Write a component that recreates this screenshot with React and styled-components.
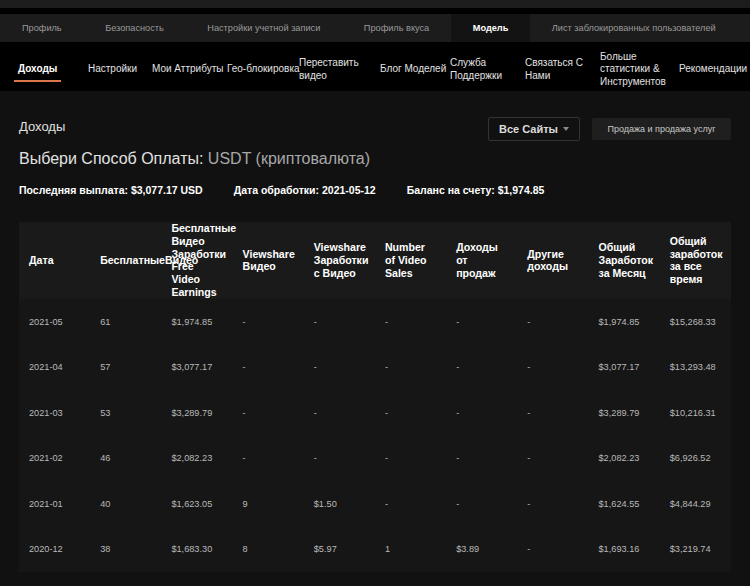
import React from 'react';
import styled, { createGlobalStyle } from 'styled-components';

const GlobalStyle = createGlobalStyle`
  html, body {
    margin: 0;
    padding: 0;
    background: #111111;
  }
  body {
    font-family: "Liberation Sans", Arial, sans-serif;
    color: #dddddd;
  }
`;

const TABS = [
  'Профиль',
  'Безопасность',
  'Настройки учетной записи',
  'Профиль вкуса',
  'Модель',
  'Лист заблокированных пользователей',
];

const NAV = [
  { lines: ['Доходы'], w: 70, active: true },
  { lines: ['Настройки'], w: 64 },
  { lines: ['Мои Аттрибуты'], w: 75 },
  { lines: ['Гео-блокировка'], w: 72 },
  { lines: ['Переставить', 'видео'], w: 81 },
  { lines: ['Блог Моделей'], w: 70 },
  { lines: ['Служба', 'Поддержки'], w: 75 },
  { lines: ['Связаться С', 'Нами'], w: 75 },
  { lines: ['Больше', 'статистики &', 'Инструментов'], w: 79 },
  { lines: ['Рекомендации'], w: 72 },
];

const HEADERS = [
  'Дата',
  'БесплатныеВидео',
  'Бесплатные Видео Заработки Free Video Earnings',
  'Viewshare Видео',
  'Viewshare Заработки с Видео',
  'Number of Video Sales',
  'Доходы от продаж',
  'Другие доходы',
  'Общий Заработок за Месяц',
  'Общий заработок за все время',
];

const ROWS = [
  ['2021-05', '61', '$1,974.85', '-', '-', '-', '-', '-', '$1,974.85', '$15,268.33'],
  ['2021-04', '57', '$3,077.17', '-', '-', '-', '-', '-', '$3,077.17', '$13,293.48'],
  ['2021-03', '53', '$3,289.79', '-', '-', '-', '-', '-', '$3,289.79', '$10,216.31'],
  ['2021-02', '46', '$2,082.23', '-', '-', '-', '-', '-', '$2,082.23', '$6,926.52'],
  ['2021-01', '40', '$1,623.05', '9', '$1.50', '-', '-', '-', '$1,624.55', '$4,844.29'],
  ['2020-12', '38', '$1,683.30', '8', '$5.97', '1', '$3.89', '-', '$1,693.16', '$3,219.74'],
];

const App = () => {
  return (
    <>
      <GlobalStyle />
      <TopStrip />
      <TabBar>
        {TABS.map((t) => (
          <Tab key={t} $active={t === 'Модель'}>
            {t}
          </Tab>
        ))}
      </TabBar>
      <Nav>
        {NAV.map((item) => (
          <NavItem key={item.lines.join(' ')} style={{ '--w': item.w + 'px' }}>
            <NavLabel $active={item.active}>
              {item.lines.map((l) => (
                <NavLine key={l}>{l}</NavLine>
              ))}
            </NavLabel>
          </NavItem>
        ))}
      </Nav>
      <Main>
        <TitleRow>
          <PageTitle>Доходы</PageTitle>
          <Actions>
            <SelectButton>
              Все Сайты <Caret />
            </SelectButton>
            <GhostButton>Продажа и продажа услуг</GhostButton>
          </Actions>
        </TitleRow>
        <Method>
          Выбери Способ Оплаты: <MethodValue>USDT (криптовалюта)</MethodValue>
        </Method>
        <Summary>
          <span>Последняя выплата: $3,077.17 USD</span>
          <span>Дата обработки: 2021-05-12</span>
          <span>Баланс на счету: $1,974.85</span>
        </Summary>
        <Table>
          <colgroup>
            {HEADERS.map((h) => (
              <col key={h} />
            ))}
          </colgroup>
          <thead>
            <tr>
              {HEADERS.map((h) => (
                <Th key={h}>{h}</Th>
              ))}
            </tr>
          </thead>
          <tbody>
            {ROWS.map((r) => (
              <tr key={r[0]}>
                {r.map((c, i) => (
                  <Td key={i}>{c}</Td>
                ))}
              </tr>
            ))}
          </tbody>
        </Table>
      </Main>
    </>
  );
};

const TopStrip = styled.div`
  height: 8px;
  background: #1d1d1d;
  border-bottom: 6px solid #000000;
`;

const TabBar = styled.div`
  display: flex;
  height: 28px;
  background: #1c1c1c;
`;

const Tab = styled.div`
  display: flex;
  align-items: center;
  padding: 0 21.5px 0 22px;
  font-size: 9.2px;
  white-space: nowrap;
  color: ${(p) => (p.$active ? '#ffffff' : '#9a9a9a')};
  font-weight: ${(p) => (p.$active ? 700 : 400)};
  background: ${(p) => (p.$active ? '#131313' : 'transparent')};
`;

const Nav = styled.nav`
  box-sizing: border-box;
  display: flex;
  align-items: center;
  height: 49px;
  padding: 6px 0 0 18px;
  background: #000000;
`;

const NavItem = styled.div`
  flex: 0 0 var(--w);
  width: var(--w);
  font-size: 10px;
  line-height: 12.5px;
  color: #e2e2e2;
`;

const NavLabel = styled.span`
  display: inline-block;
  ${(p) =>
    p.$active &&
    `
    margin-left: -4px;
    padding: 6px 4px 5px;
    font-weight: 700;
    color: #ffffff;
    border-bottom: 2px solid #d9774a;
  `}
`;

const NavLine = styled.span`
  display: block;
  white-space: nowrap;
`;

const Main = styled.main`
  padding: 26px 19px 16px;
`;

const TitleRow = styled.div`
  display: flex;
  align-items: center;
  justify-content: space-between;
  height: 24px;
`;

const PageTitle = styled.h1`
  margin: 0 0 5px;
  font-size: 13px;
  font-weight: 400;
  color: #e0e0e0;
`;

const Actions = styled.div`
  display: flex;
  align-items: center;
  gap: 12px;
`;

const SelectButton = styled.button`
  display: flex;
  align-items: center;
  justify-content: center;
  gap: 5px;
  width: 92px;
  height: 24px;
  padding: 0;
  background: #111111;
  border: 1px solid #333333;
  border-radius: 2px;
  font-family: inherit;
  font-size: 11px;
  font-weight: 700;
  color: #dddddd;
`;

const Caret = styled.span`
  width: 0;
  height: 0;
  border-left: 3.5px solid transparent;
  border-right: 3.5px solid transparent;
  border-top: 4px solid #888888;
`;

const GhostButton = styled.button`
  width: 139px;
  height: 22px;
  padding: 0;
  background: #1f1f1f;
  border: none;
  border-radius: 2px;
  font-family: inherit;
  font-size: 9px;
  color: #c8c8c8;
`;

const Method = styled.h2`
  margin: 9px 0 0;
  font-size: 16px;
  line-height: 18px;
  font-weight: 400;
  color: #e2e2e2;
`;

const MethodValue = styled.span`
  color: #a8a8a8;
`;

const Summary = styled.div`
  display: flex;
  gap: 31px;
  margin-top: 16px;
  font-size: 10.5px;
  font-weight: 700;
  color: #ffffff;
`;

const Table = styled.table`
  width: 712px;
  margin-top: 26px;
  table-layout: fixed;
  border-collapse: collapse;
  background: #161616;

  col {
    width: 71.2px;
  }
`;

const Th = styled.th`
  height: 76px;
  padding: 0 9px 0 10px;
  background: #1a1a1a;
  text-align: left;
  vertical-align: middle;
  font-size: 10.6px;
  line-height: 12.8px;
  font-weight: 700;
  color: #ffffff;
  overflow: visible;
`;

const Td = styled.td`
  height: 45.5px;
  padding: 0 6px 0 10px;
  font-size: 9.2px;
  color: #b9b9b9;
  vertical-align: middle;
`;

export default App;
